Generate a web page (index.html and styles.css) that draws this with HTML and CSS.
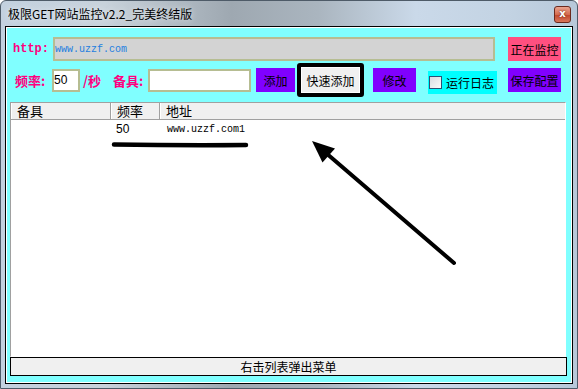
FILE: index.html
```html
<!DOCTYPE html>
<html lang="zh-CN">
<head>
    <meta charset="UTF-8">
    <title>极限GET网站监控v2.2_完美终结版</title>
    <link rel="stylesheet" href="styles.css">
</head>
<body>
    <div class="window">
        <div class="titlebar">
            <span class="title">极限GET网站监控v2.2_完美终结版</span>
            <span class="close">x</span>
        </div>
        <div class="client">
            <div class="panel">
                <div class="row row-url">
                    <span class="label mono">http:</span>
                    <input class="field url" value="www.uzzf.com" readonly>
                    <button class="btn pink">正在监控</button>
                </div>
                <div class="row row-opts">
                    <span class="label lbl-freq">频率:</span>
                    <input class="field freq" value="50" readonly>
                    <span class="label lbl-sec">/秒</span>
                    <span class="label lbl-note">备具:</span>
                    <input class="field note" value="" readonly>
                    <button class="btn purple btn-add">添加</button>
                    <button class="btn quick">快速添加</button>
                    <button class="btn purple btn-edit">修改</button>
                    <label class="check"><span class="box"></span>运行日志</label>
                    <button class="btn purple btn-save">保存配置</button>
                </div>
                <div class="list">
                    <div class="list-head">
                        <span class="col col-note">备具</span>
                        <span class="col col-freq">频率</span>
                        <span class="col col-addr">地址</span>
                    </div>
                    <div class="list-row">
                        <span class="col col-note"></span>
                        <span class="col col-freq">50</span>
                        <span class="col col-addr mono-url">www.uzzf.com1</span>
                    </div>
                </div>
                <div class="status">右击列表弹出菜单</div>
            </div>
        </div>

        <!-- hand drawn marks over the screenshot -->
        <svg class="marks" width="578" height="389" viewBox="0 0 578 389">
            <path d="M114 144.5 Q180 145.5 246 145" stroke="#000" stroke-width="4.5" stroke-linecap="round" fill="none"/>
            <line x1="454" y1="263" x2="326" y2="153" stroke="#000" stroke-width="4" stroke-linecap="round"/>
            <polygon points="312,141 335,148.5 322.5,162.5" fill="#000"/>
        </svg>
    </div>
</body>
</html>
```

FILE: styles.css
```css
body {
    margin: 0;
    font-family: "Noto Sans CJK SC", sans-serif;
    font-size: 12px;
}
.window {
    position: relative;
    width: 578px;
    height: 389px;
    box-sizing: border-box;
    border: 1px solid #4e5b68;
    border-radius: 6px 6px 0 0;
    padding: 0 4px 4px;
    background: linear-gradient(90deg, #c3d1df 0%, #c8d2db 18%, #9ea8b1 40%, #aab5bf 55%, #cad9e9 72%, #c3d3e3 88%, #b7c8d9 100%);
}
.titlebar {
    height: 25px;
    display: flex;
    align-items: center;
    justify-content: space-between;
    padding-left: 3px;
}
.title {
    font-size: 12px;
    color: #000;
    text-shadow: 0 0 6px rgba(255,255,255,0.8);
}
.close {
    width: 17px;
    height: 17px;
    margin-right: 2px;
    margin-top: 2px;
    box-sizing: border-box;
    border: 1px solid #6b2a1e;
    border-radius: 3px;
    background: linear-gradient(#eaa48f, #d56b4f 50%, #c0452a 51%, #d8765a);
    color: #fff;
    font: bold 10px "DejaVu Sans", sans-serif;
    line-height: 14px;
    text-align: center;
    text-shadow: 0 0 2px #5a1a10;
}
.client {
    height: 358px;
    box-sizing: border-box;
    border: 1px solid #000;
}
.panel {
    height: 356px;
    box-sizing: border-box;
    border: 1px solid #fff;
    background-color: #80ffff;
}
.row {
    display: flex;
    align-items: center;
}
.row-url {
    margin-top: 9px;
    height: 24px;
    padding-left: 6px;
}
.row-opts {
    margin-top: 2px;
    height: 34px;
    padding-left: 8px;
}
.label {
    color: #ff0080;
    font-weight: bold;
    font-size: 13px;
    white-space: nowrap;
}
.mono {
    font-family: "Liberation Mono", monospace;
    font-size: 12px;
    width: 40px;
}
.lbl-freq { width: 37px; }
.lbl-sec { width: 19px; margin-left: 3px; }
.lbl-note { width: 35px; margin-left: 11px; }
.field {
    box-sizing: border-box;
    border: 2px solid #b6bd92;
    padding: 0;
    outline: none;
    font-family: "Liberation Sans", sans-serif;
    font-size: 12px;
    color: #000;
    background-color: #fff;
}
.url {
    width: 442px;
    height: 24px;
    background-color: #d3d3d3;
    color: #1e7fe0;
    font-family: "Liberation Mono", monospace;
    font-size: 10px;
}
.freq {
    width: 28px;
    height: 23px;
}
.note {
    width: 103px;
    height: 23px;
}
.btn {
    box-sizing: border-box;
    height: 24px;
    padding: 0;
    border: none;
    font-family: "Noto Sans CJK SC", sans-serif;
    font-size: 12px;
    color: #000;
    white-space: nowrap;
}
.pink {
    background-color: #ff5080;
    width: 53px;
    margin-left: 13px;
}
.purple {
    background-color: #8000ff;
}
.btn-add { width: 39px; margin-left: 5px; }
.btn-edit { width: 43px; margin-left: 9px; }
.btn-save { width: 53px; margin-left: 11px; }
.quick {
    width: 67px;
    height: 34px;
    margin-left: 2px;
    border: 4px solid #000;
    border-radius: 3px;
    background-color: #f0f0f0;
    box-shadow: inset 0 0 0 1px #fff;
}
.check {
    display: flex;
    align-items: center;
    width: 69px;
    height: 23px;
    margin-left: 12px;
    margin-top: 5px;
    padding-left: 1px;
    box-sizing: border-box;
    background-color: #00ffff;
    white-space: nowrap;
}
.box {
    width: 13px;
    height: 13px;
    box-sizing: border-box;
    border: 1px solid #2f5074;
    background: linear-gradient(135deg, #d8dce2, #fafafa);
    margin-right: 4px;
}
.list {
    margin: 5px 0 0 3px;
    width: 556px;
    height: 255px;
    box-sizing: border-box;
    border: 1px solid;
    border-color: #a0a0a0 #fff #fff #a0a0a0;
    background-color: #fff;
}
.list-head {
    display: flex;
    height: 16px;
    background-color: #f0f0f0;
    border-bottom: 1px solid #a0a0a0;
    font-size: 13px;
    line-height: 16px;
}
.list-head .col {
    border-right: 1px solid #a0a0a0;
    box-shadow: inset 1px 0 0 #fff;
}
.col {
    box-sizing: border-box;
    padding-left: 6px;
    white-space: nowrap;
}
.col-note { width: 100px; }
.col-freq { width: 49px; }
.col-addr { flex: 1; border-right: none !important; }
.list-row {
    display: flex;
    height: 17px;
    line-height: 17px;
    margin-top: 1px;
    font-family: "Liberation Sans", sans-serif;
}
.list-row .col-freq { padding-left: 5px; }
.list-row .col-addr { padding-left: 7px; }
.mono-url {
    font-family: "Liberation Mono", monospace;
    font-size: 10px;
}
.status {
    margin-left: 3px;
    width: 557px;
    height: 19px;
    box-sizing: border-box;
    border: 1px solid #000;
    background-color: #f0f0f0;
    text-align: center;
    line-height: 17px;
}
.marks {
    position: absolute;
    top: -1px;
    left: -1px;
    pointer-events: none;
}
```
